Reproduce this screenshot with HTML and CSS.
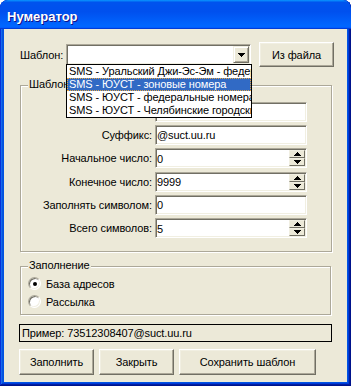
FILE: index.html
```html
<!DOCTYPE html>
<html lang="ru">
<head>
<meta charset="utf-8">
<title>Нумератор</title>
<link rel="stylesheet" href="styles.css">
</head>
<body>
<div class="window">
  <div class="titlebar"><span class="title">Нумератор</span></div>
  <div class="client">
    <div class="top-row">
      <span class="tpl-label">Шаблон:</span>
      <div class="combo">
        <div class="combo-field"></div>
        <div class="combo-btn">
          <svg width="7" height="4" viewBox="0 0 7 4" shape-rendering="crispEdges"><path d="M0 0h7v1H0zM1 1h5v1H1zM2 2h3v1H2zM3 3h1v1H3z" fill="#000"/></svg>
        </div>
        <ul class="combo-list">
          <li>SMS - Уральский Джи-Эс-Эм - федеральные номера</li>
          <li class="sel">SMS - ЮУСТ - зоновые номера</li>
          <li>SMS - ЮУСТ - федеральные номера</li>
          <li>SMS - ЮУСТ - Челябинские городские номера</li>
        </ul>
      </div>
      <button class="btn btn-file">Из файла</button>
    </div>

    <div class="group group-tpl">
      <span class="legend">Шаблон</span>
      <div class="fields">
        <label>Префикс:</label>
        <div class="edit"></div>
        <label>Суффикс:</label>
        <div class="edit">@suct.uu.ru</div>
        <label>Начальное число:</label>
        <div class="edit spin-edit"><span class="val">0</span>
          <div class="spin">
            <div class="spin-btn"><svg width="7" height="4" viewBox="0 0 7 4" shape-rendering="crispEdges"><path d="M3 0h1v1H3zM2 1h3v1H2zM1 2h5v1H1zM0 3h7v1H0z" fill="#000"/></svg></div>
            <div class="spin-btn"><svg width="7" height="4" viewBox="0 0 7 4" shape-rendering="crispEdges"><path d="M0 0h7v1H0zM1 1h5v1H1zM2 2h3v1H2zM3 3h1v1H3z" fill="#000"/></svg></div>
          </div>
        </div>
        <label>Конечное число:</label>
        <div class="edit spin-edit"><span class="val">9999</span>
          <div class="spin">
            <div class="spin-btn"><svg width="7" height="4" viewBox="0 0 7 4" shape-rendering="crispEdges"><path d="M3 0h1v1H3zM2 1h3v1H2zM1 2h5v1H1zM0 3h7v1H0z" fill="#000"/></svg></div>
            <div class="spin-btn"><svg width="7" height="4" viewBox="0 0 7 4" shape-rendering="crispEdges"><path d="M0 0h7v1H0zM1 1h5v1H1zM2 2h3v1H2zM3 3h1v1H3z" fill="#000"/></svg></div>
          </div>
        </div>
        <label>Заполнять символом:</label>
        <div class="edit">0</div>
        <label>Всего символов:</label>
        <div class="edit spin-edit"><span class="val">5</span>
          <div class="spin">
            <div class="spin-btn"><svg width="7" height="4" viewBox="0 0 7 4" shape-rendering="crispEdges"><path d="M3 0h1v1H3zM2 1h3v1H2zM1 2h5v1H1zM0 3h7v1H0z" fill="#000"/></svg></div>
            <div class="spin-btn"><svg width="7" height="4" viewBox="0 0 7 4" shape-rendering="crispEdges"><path d="M0 0h7v1H0zM1 1h5v1H1zM2 2h3v1H2zM3 3h1v1H3z" fill="#000"/></svg></div>
          </div>
        </div>
      </div>
    </div>

    <div class="group group-fill">
      <span class="legend">Заполнение</span>
      <div class="radios">
        <div class="radio-row"><span class="radio checked"></span><span>База адресов</span></div>
        <div class="radio-row"><span class="radio"></span><span>Рассылка</span></div>
      </div>
    </div>

    <div class="example">Пример: 73512308407@suct.uu.ru</div>

    <div class="buttons">
      <button class="btn btn-fill">Заполнить</button>
      <button class="btn btn-close">Закрыть</button>
      <button class="btn btn-save">Сохранить шаблон</button>
    </div>
  </div>
</div>
</body>
</html>
```

FILE: styles.css
```css
* {
  box-sizing: border-box;
}

html,
body {
  margin: 0;
  padding: 0;
}

body {
  background: #ffffff;
  font-family: "Liberation Sans", Arial, sans-serif;
  font-size: 11px;
  letter-spacing: -0.1px;
  color: #000;
}

.window {
  width: 351px;
  height: 386px;
  display: flex;
  flex-direction: column;
  padding: 0 4px 4px;
  background: #0054e3;
  border-radius: 8px 8px 0 0;
  overflow: hidden;
  box-shadow:
    inset -1px -1px #00138c,
    inset 1px 1px #0831d9,
    inset -2px -2px #001ea0,
    inset 2px 2px #166aee,
    inset -3px -3px #003bda,
    inset 3px 3px #0855dd;
}

.titlebar {
  height: 29px;
  margin: 0 -4px;
  padding: 3px 0 0 7px;
  display: flex;
  align-items: center;
  border-radius: 8px 8px 0 0;
  background: linear-gradient(180deg, #0997ff, #0053ee 8%, #0050ee 40%, #0066ff 88%, #0066ff 93%, #005bff 95%, #003dd7 96%, #003dd7);
}

.title {
  font-family: "Liberation Sans", Arial, sans-serif;
  font-weight: bold;
  font-size: 13px;
  line-height: 15px;
  letter-spacing: 0;
  color: #fff;
  text-shadow: 1px 1px #0f1089;
}

.client {
  flex: 1;
  background: #ece9d8;
  padding: 13px 0 0 16px;
  display: flex;
  flex-direction: column;
}

/* top row */
.top-row {
  display: flex;
  align-items: center;
  height: 25px;
}

.tpl-label {
  width: 46px;
}

.combo {
  position: relative;
  z-index: 2;
  width: 185px;
  height: 21px;
  display: flex;
}

.combo-field {
  flex: 1;
  height: 100%;
  background: #fff;
  border: 1px solid;
  border-color: #aca899 #fff #fff #aca899;
  box-shadow: inset 1px 1px #716f64, inset -1px -1px #f1efe2;
}

.combo-btn {
  position: absolute;
  right: 2px;
  top: 2px;
  width: 16px;
  height: 17px;
  display: flex;
  align-items: center;
  justify-content: center;
  background: #ece9d8;
  border: 1px solid;
  border-color: #f1efe2 #716f64 #716f64 #f1efe2;
  box-shadow: inset 1px 1px #fff, inset -1px -1px #aca899;
}

.combo-list {
  position: absolute;
  left: 0;
  top: 20px;
  width: 186px;
  margin: 0;
  padding: 0;
  list-style: none;
  background: #fff;
  border: 1px solid #000;
  overflow: hidden;
}

.combo-list li {
  height: 13px;
  line-height: 13px;
  padding-left: 2px;
  white-space: nowrap;
  overflow: hidden;
}

.combo-list li.sel {
  background: #316ac5;
  color: #fff;
  outline: 1px dotted #e8a640;
  outline-offset: -1px;
}

.btn {
  font-family: inherit;
  font-size: 11px;
  letter-spacing: -0.1px;
  color: #000;
  background: #ece9d8;
  border: 1px solid;
  border-color: #fff #716f64 #716f64 #fff;
  box-shadow: inset -1px -1px #aca899, inset 1px 1px #f1efe2;
  padding: 0;
  border-radius: 0;
}

.btn-file {
  width: 75px;
  height: 25px;
  margin-left: 8px;
}

/* group boxes */
.group {
  position: relative;
  border: 1px solid #aca899;
  box-shadow: 1px 1px 0 #fff, inset 1px 1px 0 #fff;
}

.legend {
  position: absolute;
  top: -8px;
  left: 7px;
  padding: 0 1px;
  line-height: 13px;
  background: #ece9d8;
}

.group-tpl {
  margin-top: 18px;
  width: 312px;
  height: 167px;
}

.fields {
  display: grid;
  grid-template-columns: 131px 152px;
  grid-auto-rows: 20px;
  column-gap: 3px;
  row-gap: 3.33px;
  padding-top: 15.67px;
  align-items: center;
}

.fields label {
  text-align: right;
  white-space: nowrap;
}

.edit {
  height: 20px;
  display: flex;
  align-items: center;
  padding-left: 1px;
  background: #fff;
  border: 1px solid;
  border-color: #aca899 #fff #fff #aca899;
  box-shadow: inset 1px 1px #716f64, inset -1px -1px #f1efe2;
  white-space: nowrap;
  overflow: hidden;
  padding-top: 1px;
}

.spin-edit {
  justify-content: space-between;
  padding-right: 1px;
  padding-top: 0;
}

.val {
  padding-top: 1px;
}

.spin {
  width: 16px;
  height: 16px;
  display: flex;
  flex-direction: column;
}

.spin-btn {
  flex: 1;
  display: flex;
  align-items: center;
  justify-content: center;
  background: #ece9d8;
  border: 1px solid;
  border-color: #f1efe2 #716f64 #716f64 #f1efe2;
}

.group-fill {
  margin-top: 14px;
  width: 311px;
  height: 49px;
}

.radios {
  display: flex;
  flex-direction: column;
  gap: 5px;
  padding: 10px 0 0 7px;
}

.radio-row {
  display: flex;
  align-items: center;
  gap: 5px;
  height: 13px;
}

.radio {
  position: relative;
  width: 13px;
  height: 13px;
  border-radius: 50%;
  background: #fff;
  border: 1px solid;
  border-color: #aca899 #fff #fff #aca899;
  box-shadow: inset 1px 1px #716f64, inset -1px -1px #f1efe2;
}

.radio.checked::after {
  content: "";
  position: absolute;
  left: 3.5px;
  top: 3.5px;
  width: 4px;
  height: 4px;
  border-radius: 50%;
  background: #000;
}

.example {
  margin: 9px 0 0 -1px;
  width: 313px;
  height: 18px;
  line-height: 16px;
  padding-left: 2px;
  border: 1px solid #000;
  white-space: nowrap;
}

.buttons {
  display: flex;
  gap: 5px;
  margin: 7px 0 0 -1px;
}

.buttons .btn {
  height: 26px;
}

.btn-fill,
.btn-close {
  width: 75px;
}

.btn-save {
  width: 137px;
}
```
